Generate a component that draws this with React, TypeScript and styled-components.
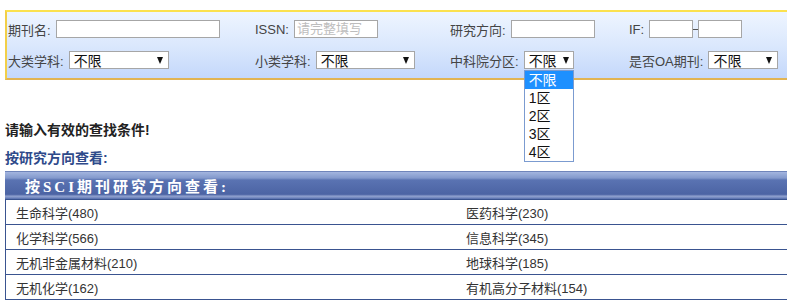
import React from "react";
import styled, { createGlobalStyle } from "styled-components";

const Global = createGlobalStyle`
  html, body { margin: 0; padding: 0; overflow: hidden; background: #fff; }
  body { font-family: "Liberation Sans", "Noto Sans CJK SC", sans-serif; font-size: 13px; color: #333; }
`;

const Page = styled.div`
  padding: 10px 0 0 5px;
  width: 782px;
`;

const FilterPanel = styled.div`
  position: relative;
  box-sizing: border-box;
  width: 782px;
  height: 70px;
  border-top: 2px solid #fbe14e;
  border-left: 2px solid #f2cf48;
  border-bottom: 2px solid #e2b452;
  background: linear-gradient(to bottom, #eef5ff 0%, #dbe8fd 50%, #c4d8fb 100%);
  padding: 8px 0 0 1px;
  display: grid;
  grid-template-columns: 247px 195px 179px 1fr;
  grid-template-rows: 18px 18px;
  row-gap: 13px;
`;

const Cell = styled.div`
  display: flex;
  align-items: center;
  height: 18px;
`;

const Label = styled.span`
  color: #444;
  font-size: 13px;
  margin-right: 5px;
  white-space: nowrap;
`;

const TextInput = styled.div<{ $w: number }>`
  box-sizing: border-box;
  width: ${(p) => p.$w}px;
  height: 18px;
  background: #fff;
  border: 1px solid #a6a6a6;
  color: #bdbdbd;
  font-size: 13px;
  line-height: 16px;
  padding-left: 2px;
  white-space: nowrap;
  overflow: hidden;
`;

const Dash = styled.span`
  width: 5px;
  height: 1px;
  background: #555;
`;

const SelectBox = styled.div<{ $w: number; $mr?: number }>`
  position: relative;
  box-sizing: border-box;
  width: ${(p) => p.$w}px;
  height: 18px;
  background: #fff;
  border: 1px solid #a6a6a6;
  display: flex;
  align-items: center;
  justify-content: space-between;
  padding: 0 ${(p) => p.$mr ?? 5}px 0 4px;
  font-size: 14px;
  color: #111;
`;

const Caret = styled.span`
  width: 0;
  height: 0;
  border-left: 3.5px solid transparent;
  border-right: 3.5px solid transparent;
  border-top: 7px solid #111;
`;

const DropList = styled.div`
  position: absolute;
  z-index: 5;
  left: -1px;
  top: 18px;
  box-sizing: border-box;
  width: 50px;
  border: 1px solid #7b9bd0;
  background: #fff;
`;

const DropItem = styled.div<{ $active?: boolean }>`
  height: 18px;
  line-height: 18px;
  padding-left: 4px;
  font-size: 14px;
  color: ${(p) => (p.$active ? "#fff" : "#111")};
  background: ${(p) => (p.$active ? "#1e90ff" : "#fff")};
`;

const Message = styled.div`
  margin-top: 41px;
  line-height: 19px;
  font-weight: bold;
  color: #222;
  font-size: 14px;
`;

const SubTitle = styled.div`
  margin-top: 9px;
  line-height: 19px;
  font-weight: bold;
  color: #2e4a8a;
  font-size: 14px;
`;

const HeaderBar = styled.div`
  margin-top: 3px;
  height: 28px;
  box-sizing: border-box;
  display: flex;
  align-items: center;
  padding-left: 20px;
  background: linear-gradient(
    to bottom,
    #3b5495 0px,
    #a3b5df 1px,
    #8399cc 7px,
    #5a73b2 9px,
    #4c64a4 23px,
    #5a70ad 24px,
    #93a4d0 25px,
    #7186be 27px,
    #5069a8 28px
  );
  color: #fff;
  font-family: "Liberation Serif", "Noto Sans CJK SC", serif;
  font-weight: bold;
  font-size: 15px;
  letter-spacing: 3px;
`;

const Table = styled.div`
  display: grid;
  grid-template-columns: 450px 1fr;
  border-top: 1px solid #3a5490;
  border-left: 1px solid #3a5490;
`;

const TableCell = styled.div`
  height: 24px;
  border-bottom: 1px solid #3a5490;
  display: flex;
  align-items: center;
  padding-left: 10px;
  font-size: 13px;
  color: #333;
`;

const subjects: [string, string][] = [
  ["生命科学(480)", "医药科学(230)"],
  ["化学科学(566)", "信息科学(345)"],
  ["无机非金属材料(210)", "地球科学(185)"],
  ["无机化学(162)", "有机高分子材料(154)"],
];

const Select = ({ w, mr, children }: { w: number; mr?: number; children?: React.ReactNode }) => (
  <SelectBox $w={w} $mr={mr}>
    <span>不限</span>
    <Caret />
    {children}
  </SelectBox>
);

export default function App() {
  return (
    <>
      <Global />
      <Page>
        <FilterPanel>
          <Cell>
            <Label>期刊名:</Label>
            <TextInput $w={164} />
          </Cell>
          <Cell>
            <Label>ISSN:</Label>
            <TextInput $w={84}>请完整填写</TextInput>
          </Cell>
          <Cell>
            <Label>研究方向:</Label>
            <TextInput $w={84} />
          </Cell>
          <Cell>
            <Label>IF:</Label>
            <TextInput $w={44} />
            <Dash />
            <TextInput $w={44} />
          </Cell>
          <Cell>
            <Label>大类学科:</Label>
            <Select w={100} />
          </Cell>
          <Cell>
            <Label>小类学科:</Label>
            <Select w={99} />
          </Cell>
          <Cell>
            <Label>中科院分区:</Label>
            <Select w={50} mr={4}>
              <DropList>
                <DropItem $active>不限</DropItem>
                <DropItem>1区</DropItem>
                <DropItem>2区</DropItem>
                <DropItem>3区</DropItem>
                <DropItem>4区</DropItem>
              </DropList>
            </Select>
          </Cell>
          <Cell>
            <Label>是否OA期刊:</Label>
            <Select w={70} />
          </Cell>
        </FilterPanel>
        <Message>请输入有效的查找条件!</Message>
        <SubTitle>按研究方向查看:</SubTitle>
        <HeaderBar>按SCI期刊研究方向查看:</HeaderBar>
        <Table>
          {subjects.map(([a, b]) => (
            <React.Fragment key={a}>
              <TableCell>{a}</TableCell>
              <TableCell>{b}</TableCell>
            </React.Fragment>
          ))}
        </Table>
      </Page>
    </>
  );
}
